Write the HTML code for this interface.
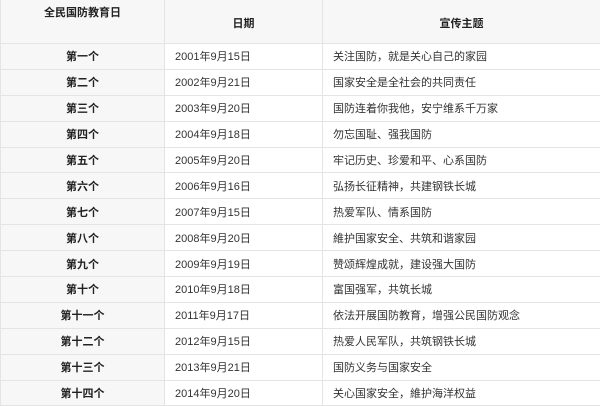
<!DOCTYPE html>
<html><head><meta charset="utf-8"><style>
html,body{margin:0;padding:0;width:600px;height:401px;overflow:hidden;background:#fff;}
table{border-collapse:collapse;position:absolute;left:0;top:-1px;width:601px;table-layout:fixed;font-family:"Liberation Sans","Noto Sans CJK SC",sans-serif;font-size:11px;color:#333;}
td,th{border:1px solid #e4e4e4;padding:0 10px;height:24.9px;white-space:nowrap;}
th{background:#f7f7f7;font-weight:bold;color:#222;height:39px;padding-top:2px;}
td.l{background:#f7f7f7;text-align:center;font-weight:bold;color:#222;}
td.d{color:#333;}
</style></head><body>
<table>
<colgroup><col style="width:164px"><col style="width:158px"><col></colgroup>
<tr><th style="vertical-align:top;padding-top:4px">全民国防教育日</th><th>日期</th><th>宣传主题</th></tr>
<tr><td class="l">第一个</td><td class="d">2001年9月15日</td><td>关注国防，就是关心自己的家园</td></tr>
<tr><td class="l">第二个</td><td class="d">2002年9月21日</td><td>国家安全是全社会的共同责任</td></tr>
<tr><td class="l">第三个</td><td class="d">2003年9月20日</td><td>国防连着你我他，安宁维系千万家</td></tr>
<tr><td class="l">第四个</td><td class="d">2004年9月18日</td><td>勿忘国耻、强我国防</td></tr>
<tr><td class="l">第五个</td><td class="d">2005年9月20日</td><td>牢记历史、珍爱和平、心系国防</td></tr>
<tr><td class="l">第六个</td><td class="d">2006年9月16日</td><td>弘扬长征精神，共建钢铁长城</td></tr>
<tr><td class="l">第七个</td><td class="d">2007年9月15日</td><td>热爱军队、情系国防</td></tr>
<tr><td class="l">第八个</td><td class="d">2008年9月20日</td><td>維护国家安全、共筑和谐家园</td></tr>
<tr><td class="l">第九个</td><td class="d">2009年9月19日</td><td>赞颂辉煌成就，建设强大国防</td></tr>
<tr><td class="l">第十个</td><td class="d">2010年9月18日</td><td>富国强军，共筑长城</td></tr>
<tr><td class="l">第十一个</td><td class="d">2011年9月17日</td><td>依法开展国防教育，增强公民国防观念</td></tr>
<tr><td class="l">第十二个</td><td class="d">2012年9月15日</td><td>热爱人民军队，共筑钢铁长城</td></tr>
<tr><td class="l">第十三个</td><td class="d">2013年9月21日</td><td>国防义务与国家安全</td></tr>
<tr><td class="l">第十四个</td><td class="d">2014年9月20日</td><td>关心国家安全，維护海洋权益</td></tr>
</table>
</body></html>
